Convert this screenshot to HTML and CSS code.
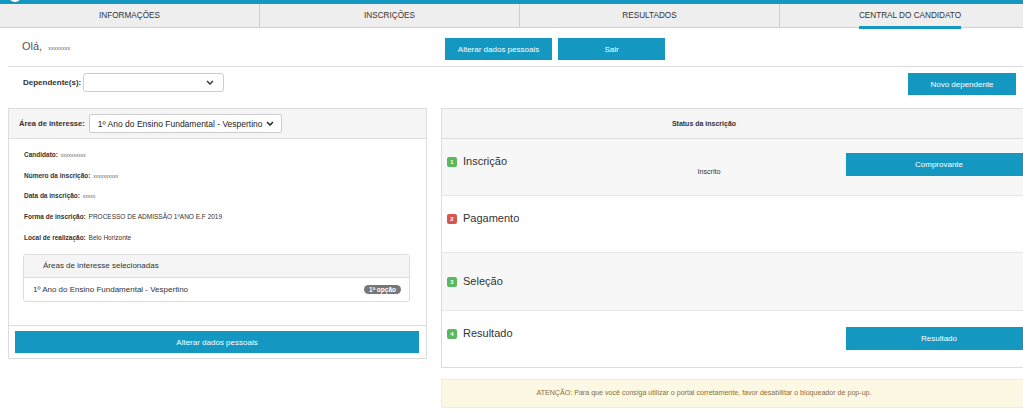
FILE: index.html
```html
<!DOCTYPE html>
<html lang="pt-BR">
<head>
<meta charset="utf-8">
<title>Central do Candidato</title>
<link rel="stylesheet" href="styles.css">
</head>
<body>
<div class="site">
  <header class="topbar"><span class="logo-dot"></span></header>
  <nav class="tabs">
    <div class="tab"><span>INFORMAÇÕES</span></div>
    <div class="tab"><span>INSCRIÇÕES</span></div>
    <div class="tab"><span>RESULTADOS</span></div>
    <div class="tab active"><span>CENTRAL DO CANDIDATO</span></div>
  </nav>
  <main class="page">
    <div class="greet-row">
      <div class="greet"><span class="hello">Olá,</span><span class="masked">xxxxxxxx</span></div>
      <div class="actions">
        <button class="btn btn-top">Alterar dados pessoais</button>
        <button class="btn btn-top">Sair</button>
      </div>
    </div>

    <div class="dep-row">
      <span class="lbl">Dependente(s):</span>
      <div class="fake-select dep-select">
        <span></span>
        <svg class="chev" width="8" height="5" viewBox="0 0 8 5"><path d="M1 1 L4 4 L7 1" fill="none" stroke="#333" stroke-width="1.4"/></svg>
      </div>
      <button class="btn btn-new">Novo dependente</button>
    </div>

    <div class="columns">
      <section class="panel left-panel">
        <div class="panel-head">
          <span class="lbl area-lbl">Área de interesse:</span>
          <div class="fake-select area-select">
            <span>1º Ano do Ensino Fundamental - Vespertino</span>
            <svg class="chev" width="8" height="5" viewBox="0 0 8 5"><path d="M1 1 L4 4 L7 1" fill="none" stroke="#222" stroke-width="1.5"/></svg>
          </div>
        </div>
        <div class="panel-body">
          <div class="field"><b>Candidato:</b> <span class="masked">xxxxxxxxxx</span></div>
          <div class="field"><b>Número da inscrição:</b> <span class="masked">xxxxxxxxxx</span></div>
          <div class="field"><b>Data da inscrição:</b> <span class="masked">xxxxx</span></div>
          <div class="field"><b>Forma de inscrição:</b> PROCESSO DE ADMISSÃO 1ºANO E.F 2019</div>
          <div class="field"><b>Local de realização:</b> Belo Horizonte</div>
          <div class="sub-panel">
            <div class="sub-head">Áreas de interesse selecionadas</div>
            <div class="sub-row">
              <span>1º Ano do Ensino Fundamental - Vespertino</span>
              <span class="pill">1ª opção</span>
            </div>
          </div>
        </div>
        <div class="panel-foot">
          <button class="btn btn-block">Alterar dados pessoais</button>
        </div>
      </section>

      <div class="right-col">
        <section class="panel status-panel">
          <div class="status-head">Status da inscrição</div>
          <div class="step shade">
            <div class="step-main">
              <div class="step-title"><span class="num green">1</span>Inscrição</div>
              <div class="step-state">Inscrito</div>
            </div>
            <button class="btn btn-step">Comprovante</button>
          </div>
          <div class="step">
            <div class="step-main">
              <div class="step-title"><span class="num red">2</span>Pagamento</div>
            </div>
          </div>
          <div class="step shade step-tall">
            <div class="step-main">
              <div class="step-title"><span class="num green">3</span>Seleção</div>
            </div>
          </div>
          <div class="step step-last">
            <div class="step-main">
              <div class="step-title"><span class="num green">4</span>Resultado</div>
            </div>
            <button class="btn btn-step btn-step-low">Resultado</button>
          </div>
        </section>
        <div class="alert">ATENÇÃO: Para que você consiga utilizar o portal corretamente, favor desabilitar o bloqueador de pop-up.</div>
      </div>
    </div>
  </main>
</div>
</body>
</html>
```

FILE: styles.css
```css
html, body {
  margin: 0;
  padding: 0;
  overflow: hidden;
  background: #fff;
}

body {
  font-family: "Liberation Sans", Arial, sans-serif;
  color: #333;
}

.site {
  width: 1040px;
}

/* top bar */
.topbar {
  height: 4px;
  background: #1497c1;
  overflow: hidden;
}
.logo-dot {
  display: block;
  width: 12px;
  height: 12px;
  margin: -10px 0 0 9px;
  border-radius: 50%;
  background: #fff;
}

/* tabs */
.tabs {
  display: grid;
  grid-template-columns: repeat(4, 260px);
  height: 24px;
  box-sizing: border-box;
  background: #eeeeee;
  border-bottom: 1px solid #cfcfcf;
}
.tab {
  display: flex;
  justify-content: center;
  align-items: flex-end;
  border-right: 1px solid #cfcfcf;
  font-size: 8.2px;
  color: #333;
}
.tab:last-child { border-right: none; }
.tab span {
  line-height: 13px;
  padding-bottom: 4px;
  border-bottom: 3px solid transparent;
  margin-bottom: -2px;
}
.tab.active span { border-bottom-color: #1497c1; }

/* page */
.page {
  padding: 0 8px;
}

.btn {
  border: none;
  border-radius: 0;
  background: #1497c1;
  color: #fff;
  font-family: inherit;
  font-size: 8px;
  height: 22px;
  padding: 0;
  cursor: pointer;
}

.greet-row {
  display: flex;
  align-items: center;
  height: 38px;
  padding-left: 14px;
  border-bottom: 1px solid #dddddd;
}
.greet {
  width: 423px;
  display: flex;
  align-items: baseline;
  margin-top: -2px;
}
.hello {
  font-size: 11px;
  color: #555;
}
.masked {
  font-size: 5.5px;
  color: #666;
}
.greet .masked { margin-left: 6px; }
.actions {
  display: flex;
  gap: 6px;
  margin-top: 4px;
}
.btn-top { width: 107px; }

.dep-row {
  display: flex;
  align-items: flex-start;
  padding: 6px 0 0 15px;
  height: 34px;
  box-sizing: border-box;
}
.lbl {
  font-weight: bold;
  font-size: 8px;
  color: #333;
  line-height: 19px;
}
.dep-row .lbl { margin-right: 2px; }

.fake-select {
  display: flex;
  align-items: center;
  justify-content: space-between;
  box-sizing: border-box;
  border: 1px solid #cccccc;
  border-radius: 3px;
  background: #fff;
}
.dep-select {
  width: 141px;
  height: 19px;
  padding: 0 9px 0 6px;
}
.btn-new {
  width: 108px;
  margin-left: auto;
  margin-right: 16px;
}

.columns {
  display: flex;
  align-items: flex-start;
  gap: 14px;
  margin-top: 7px;
}

.panel {
  box-sizing: border-box;
  border: 1px solid #dddddd;
  background: #fff;
}

/* left panel */
.left-panel {
  width: 419px;
  flex: none;
}
.panel-head {
  display: flex;
  align-items: center;
  height: 30px;
  box-sizing: border-box;
  padding-left: 10px;
  background: #f5f5f5;
  border-bottom: 1px solid #dddddd;
}
.area-lbl {
  font-size: 7.6px;
  margin-right: 4px;
}
.area-select {
  width: 193px;
  height: 19px;
  padding: 0 7px 0 8px;
  border-radius: 2px;
  font-size: 8.5px;
  color: #222;
  white-space: nowrap;
}
.panel-body {
  padding: 6px 16px 23px 14px;
}
.field {
  height: 20.7px;
  line-height: 20.7px;
  font-size: 6.5px;
  color: #333;
  padding-left: 1px;
}
.field b { margin-right: 1px; }
.field .masked { font-size: 5px; }
.sub-panel {
  margin-top: 6px;
  border: 1px solid #dddddd;
  border-radius: 3px;
  overflow: hidden;
}
.sub-head {
  height: 22px;
  line-height: 22px;
  padding-left: 19px;
  background: #f5f5f5;
  border-bottom: 1px solid #dddddd;
  font-size: 8px;
  color: #333;
}
.sub-row {
  display: flex;
  align-items: center;
  justify-content: space-between;
  height: 23px;
  padding: 0 8px 0 9px;
  font-size: 8px;
  color: #333;
}
.pill {
  background: #777;
  color: #fff;
  font-weight: bold;
  font-size: 6.5px;
  line-height: 9px;
  padding: 0 5px;
  border-radius: 5px;
}
.panel-foot {
  border-top: 1px solid #dddddd;
  padding: 5px 7px 5px 6px;
}
.btn-block {
  display: block;
  width: 100%;
}

/* right column */
.right-col {
  width: 591px;
  flex: none;
}
.status-panel {
  border-right: none;
}
.status-head {
  height: 30px;
  line-height: 30px;
  box-sizing: border-box;
  background: #f5f5f5;
  border-bottom: 1px solid #dddddd;
  text-align: center;
  padding-right: 66px;
  font-weight: bold;
  font-size: 7px;
  color: #333;
}
.step {
  display: flex;
  align-items: flex-start;
  height: 57px;
  box-sizing: border-box;
  padding: 14px 0 0 4px;
  border-bottom: 1px solid #e6e6e6;
  background: #fff;
}
.step.shade { background: #f7f7f7; }
.step-tall { height: 58px; padding-top: 20px; }
.step-last { border-bottom: none; height: 56px; }
.step-main {
  width: 400px;
  flex: none;
}
.step-title {
  display: flex;
  align-items: center;
  height: 16px;
  font-size: 11px;
  color: #333;
}
.num {
  display: inline-flex;
  align-items: center;
  justify-content: center;
  width: 10px;
  height: 10px;
  margin: 2px 6px 0 1px;
  border-radius: 2px;
  color: #fff;
  font-size: 6px;
  font-weight: bold;
}
.num.green { background: #5cb85c; }
.num.red { background: #d9534f; }
.step-state {
  width: 526px;
  text-align: center;
  font-size: 7.2px;
  line-height: 10px;
  margin-top: -2px;
  color: #333;
}
.btn-step {
  flex: 1;
  height: 23px;
}
.btn-step-low { margin-top: 2px; }

.alert {
  margin-top: 11px;
  height: 29px;
  line-height: 27px;
  box-sizing: border-box;
  background: #fcf8e3;
  border: 1px solid #faebcc;
  border-right: none;
  text-align: center;
  padding-right: 66px;
  font-size: 7.1px;
  color: #8a6d3b;
}
```
